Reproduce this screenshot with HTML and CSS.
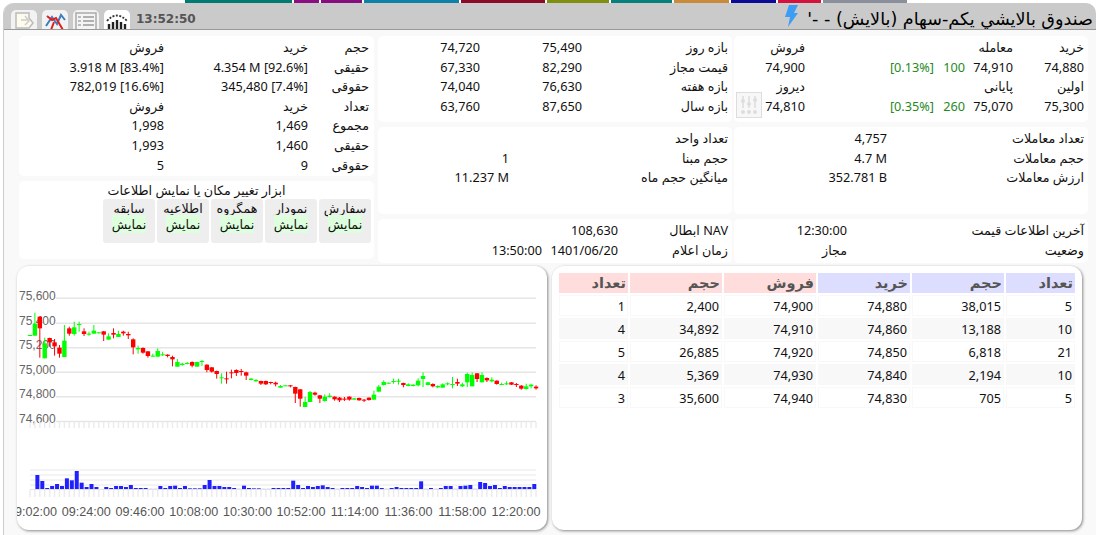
FILE: index.html
```html
<!DOCTYPE html>
<html lang="fa">
<head>
<meta charset="utf-8">
<title>بالایش</title>
<link rel="stylesheet" href="styles.css">
</head>
<body>
<div class="strip">
  <i class="s s1"></i><i class="s s2"></i><i class="s s3"></i><i class="s s4"></i><i class="s s5"></i><i class="s s6"></i><i class="s s7"></i><i class="s s8"></i><i class="s s9"></i><i class="s s10"></i><i class="s s11"></i>
</div>
<div class="win">
  <header class="head">
    <div class="tabs">
      <span class="tab"><svg width="26" height="20" viewBox="0 0 26 20"><path d="M5 3h13v5l4 5-4 5H5z" fill="#fdfbee" stroke="#bbb" stroke-width="1.5"/><path d="M10 10h7M14 6l4 5-4 4" fill="none" stroke="#ccc" stroke-width="1.5"/></svg></span>
      <span class="tab"><svg width="26" height="20" viewBox="0 0 26 20"><path d="M4 16l6-9 5 7 4-9 4 5" fill="none" stroke="#3a7fc0" stroke-width="2"/><path d="M5 6l5 4 4-2 7 12M9 20l3-8" fill="none" stroke="#e02020" stroke-width="2"/></svg></span>
      <span class="tab"><svg width="26" height="20" viewBox="0 0 26 20"><path d="M3 3h20v17H3z" fill="#f4f4f4" stroke="#aaa" stroke-width="1.5"/><path d="M10 7h11M10 11h11M10 15h11" stroke="#999" stroke-width="1.5"/><path d="M5 7h3M5 11h3M5 15h3" stroke="#bbb" stroke-width="2"/></svg></span>
      <span class="tab tab-on"><svg width="26" height="20" viewBox="0 0 26 20"><path d="M3 11q10-11 20 0" fill="none" stroke="#333" stroke-width="1.8" stroke-dasharray="2 1.5"/><path d="M5 20v-6M9 20v-8M13 20v-10M17 20v-8M21 20v-6" stroke="#222" stroke-width="2.4"/></svg></span>
    </div>
    <span class="clock">13:52:50</span>
    <svg class="bolt" width="16" height="22" viewBox="0 0 16 22"><path d="M6 0h9l-4 8h4L5 22l2-10H2z" fill="#3d9df5"/></svg>
    <h1 class="title">صندوق بالایشي یکم-سهام (بالایش) - -'</h1>
  </header>
  <main class="body">
    <section class="col">
      <div class="card c-a">
        <div class="g g-a">
          <div>حجم</div><div>خرید</div><div>فروش</div>
          <div>حقیقی</div><div class="n">4.354 M [92.6%]</div><div class="n">3.918 M [83.4%]</div>
          <div>حقوقی</div><div class="n">345,480 [7.4%]</div><div class="n">782,019 [16.6%]</div>
          <div>تعداد</div><div>خرید</div><div>فروش</div>
          <div>مجموع</div><div class="n">1,469</div><div class="n">1,998</div>
          <div>حقیقی</div><div class="n">1,460</div><div class="n">1,993</div>
          <div>حقوقی</div><div class="n">9</div><div class="n">5</div>
        </div>
      </div>
      <div class="card c-b">
        <div class="tool-title">ابزار تغییر مکان یا نمایش اطلاعات</div>
        <div class="tools">
          <div class="tool">سفارش<br><span class="show">نمایش</span></div>
          <div class="tool">نمودار<br><span class="show">نمایش</span></div>
          <div class="tool">همگروه<br><span class="show">نمایش</span></div>
          <div class="tool">اطلاعیه<br><span class="show">نمایش</span></div>
          <div class="tool">سابقه<br><span class="show">نمایش</span></div>
        </div>
      </div>
    </section>
    <section class="col">
      <div class="card c-1">
        <div class="g g-m1">
          <div>بازه روز</div><div class="n">75,490</div><div class="n">74,720</div>
          <div>قیمت مجاز</div><div class="n">82,290</div><div class="n">67,330</div>
          <div>بازه هفته</div><div class="n">76,630</div><div class="n">74,040</div>
          <div>بازه سال</div><div class="n">87,650</div><div class="n">63,760</div>
        </div>
      </div>
      <div class="card c-2">
        <div class="g g-m2">
          <div>تعداد واحد</div><div class="n"></div>
          <div>حجم مبنا</div><div class="n">1</div>
          <div>میانگین حجم ماه</div><div class="n">11.237 M</div>
        </div>
      </div>
      <div class="card c-3">
        <div class="g g-m3">
          <div>NAV ابطال</div><div class="n">108,630</div><div class="n"></div>
          <div>زمان اعلام</div><div class="n">1401/06/20</div><div class="n">13:50:00</div>
        </div>
      </div>
    </section>
    <section class="col">
      <div class="card c-1 c-rel">
        <div class="g g-r1">
          <div>خرید</div><div>معامله</div><div></div><div></div><div>فروش</div>
          <div class="n">74,880</div><div class="n">74,910</div><div class="n up">100</div><div class="n up">[0.13%]</div><div class="n">74,900</div>
          <div>اولین</div><div>پایانی</div><div></div><div></div><div>دیروز</div>
          <div class="n">75,300</div><div class="n">75,070</div><div class="n up">260</div><div class="n up">[0.35%]</div><div class="n">74,810</div>
        </div>
        <span class="slider-btn"><svg width="22" height="22" viewBox="0 0 22 22"><path d="M5 2v12M11 2v12M17 2v12" stroke="#ddd" stroke-width="1.5"/><circle cx="5" cy="7" r="2" fill="#ddd"/><circle cx="11" cy="10" r="2" fill="#ddd"/><circle cx="17" cy="6" r="2" fill="#ddd"/><circle cx="5" cy="18" r="2" fill="#ddd"/><circle cx="11" cy="18" r="2" fill="#ddd"/><circle cx="17" cy="18" r="2" fill="#ddd"/></svg></span>
      </div>
      <div class="card c-2">
        <div class="g g-r2">
          <div>تعداد معاملات</div><div class="n">4,757</div>
          <div>حجم معاملات</div><div class="n">4.7 M</div>
          <div>ارزش معاملات</div><div class="n">352.781 B</div>
        </div>
      </div>
      <div class="card c-3">
        <div class="g g-r3">
          <div>آخرین اطلاعات قیمت</div><div class="n">12:30:00</div>
          <div>وضعیت</div><div class="n">مجاز</div>
        </div>
      </div>
    </section>
  </main>
  <div class="lower">
    <div class="panel chart-panel"><svg id="chart" width="531" height="264" viewBox="17 266 531 264"></svg></div>
    <div class="panel book-panel">
      <table class="book">
        <thead>
          <tr><th class="b">تعداد</th><th class="b">حجم</th><th class="b">خرید</th><th class="r">فروش</th><th class="r">حجم</th><th class="r">تعداد</th></tr>
        </thead>
        <tbody>
          <tr><td>5</td><td>38,015</td><td>74,880</td><td>74,900</td><td>2,400</td><td>1</td></tr>
          <tr><td>10</td><td>13,188</td><td>74,860</td><td>74,910</td><td>34,892</td><td>4</td></tr>
          <tr><td>21</td><td>6,818</td><td>74,850</td><td>74,920</td><td>26,885</td><td>5</td></tr>
          <tr><td>10</td><td>2,194</td><td>74,840</td><td>74,930</td><td>5,369</td><td>4</td></tr>
          <tr><td>5</td><td>705</td><td>74,830</td><td>74,940</td><td>35,600</td><td>3</td></tr>
        </tbody>
      </table>
    </div>
  </div>
</div>
<script src="chart.js"></script>
</body>
</html>
```

FILE: styles.css
```css
* { box-sizing: border-box; }
html, body { margin: 0; padding: 0; height: 535px; overflow: hidden; background: #fff; }
body { font-family: "Noto Sans", "DejaVu Sans", sans-serif; font-size: 12.7px; color: #111; }

.strip { display: flex; height: 3px; padding-left: 185px; gap: 2px; }
.s { display: block; height: 3px; }
.s1 { width: 107px; background: #007b73; }
.s2 { width: 25px; background: #8a0f80; }
.s3 { width: 41px; background: #860d7e; }
.s4 { width: 95px; background: #0f80a8; }
.s5 { width: 84px; background: #8b0a2a; }
.s6 { width: 62px; background: #7f8f10; }
.s7 { width: 61px; background: #05807c; }
.s8 { width: 55px; background: #c98a3a; }
.s9 { width: 45px; background: #0a0a96; }
.s10 { width: 43px; background: #d3123e; }
.s11 { width: 84px; background: #8a8f9c; }

.win { margin-left: 3px; height: 532px; background: #f9f9f9; border-radius: 10px 10px 0 0; border-left: 1px solid #ccc; }
.head { display: flex; align-items: flex-start; height: 27px; padding: 0 3px 0 7px; background: #cacaca; border-radius: 10px 10px 0 0; border-bottom: 1px solid #999; overflow: hidden; }
.tabs { display: flex; gap: 5px; padding-top: 7px; }
.tab { display: block; width: 26px; height: 20px; background: #f2f2f2; border-radius: 5px 5px 0 0; }
.tab-on { background: #fff; }
.tab svg { display: block; }
.clock { margin: 8px 0 0 6px; font-family: "DejaVu Sans", sans-serif; font-weight: bold; font-size: 12px; color: #555; line-height: 16px; }
.bolt { margin: 2px 8px 0 auto; }
.title { margin: 5px 0 0; font-family: "DejaVu Sans", sans-serif; font-size: 17.6px; font-weight: normal; line-height: 22px; color: #000; direction: rtl; white-space: nowrap; }

.body { display: grid; grid-template-columns: 355px 354px 354px; column-gap: 4px; margin-left: 15px; height: 236px; padding-top: 6px; }
.body .col:nth-child(3) { margin: 0 2px 0 -2px; }
.col { display: flex; flex-direction: column; gap: 5px; }
.card { background: #fff; border-radius: 5px; padding: 2px 4px 0; }
.c-a { height: 140px; padding-right: 5px; }
.c-b { height: 78px; padding-top: 2px; }
.c-1 { height: 86px; }
.c-2 { height: 87px; }
.c-3 { height: 44px; padding-top: 2px; }
.c-rel { position: relative; }

.g { display: grid; direction: rtl; grid-auto-rows: 19.6px; line-height: 19.6px; white-space: nowrap; }
.g > div { text-align: right; }
.g-a { grid-template-columns: 61px 144px 1fr; }
.g-m1 { grid-template-columns: 146px 102px 1fr; }
.g-m2 { grid-template-columns: 219px 1fr; }
.g-m3 { grid-template-columns: 110px 76px 1fr; }
.g-r1 { grid-template-columns: 71px 48px 31px 129px 1fr; }
.g-r2 { grid-template-columns: 197px 1fr; }
.g-r3 { grid-template-columns: 237px 1fr; }
.n { direction: ltr; }
.up { color: #1f8a1f; }

.slider-btn { position: absolute; left: 2px; bottom: 4px; width: 26px; height: 26px; padding: 1px; border: 1px solid #ddd; background: #f7f7f7; }
.slider-btn svg { display: block; }

.tool-title { text-align: center; direction: rtl; line-height: 15px; }
.tools { display: flex; direction: rtl; gap: 2px; margin: 1px -1px 0 0; }
.tool { width: 52px; height: 44px; background: #eee; border-radius: 3px; text-align: center; line-height: 16px; padding-top: 1px; }
.show { background: #dfd; }

.lower { display: flex; gap: 5px; margin-left: 13px; height: 264px; }
.panel { width: 530px; height: 264px; background: #fff; border-radius: 12px; box-shadow: 1px 1px 3px #888; overflow: hidden; }
.book-panel { padding: 5px 0 0 5px; }
#chart { display: block; }
.book { width: 520px; border-collapse: separate; border-spacing: 2px; direction: rtl; table-layout: fixed; }
.book th, .book td { text-align: right; padding: 0 2px 0 0; direction: ltr; }
.book th { height: 20px; line-height: 18px; font-family: "DejaVu Sans", sans-serif; font-weight: bold; font-size: 14.5px; color: #555; direction: rtl; }
.book th:nth-child(1), .book th:nth-child(6) { width: 69px; }
.book th.b { background: #ddf; }
.book th.r { background: #fdd; }
.book td { height: 21px; border: 1px solid #f8f8f8; }
.book tbody tr:nth-child(even) td { background: #f8f8f8; }
```

FILE: chart.js
```js
(function () {
  var svg = document.getElementById('chart');
  var NS = 'http://www.w3.org/2000/svg';
  function el(name, attrs, text) {
    var e = document.createElementNS(NS, name);
    for (var k in attrs) e.setAttribute(k, attrs[k]);
    if (text) e.textContent = text;
    svg.appendChild(e);
    return e;
  }
  function line(x1, y1, x2, y2, color, w) {
    el('line', { x1: x1, y1: y1, x2: x2, y2: y2, stroke: color, 'stroke-width': w });
  }

  // Price grid and labels
  var grid = [[298.3, '75,600'], [323.3, '75,400'], [347.7, '75,200'], [372.3, '75,000'], [396.7, '74,800'], [421.5, '74,600']];
  grid.forEach(function (g) {
    line(56, g[0], 536, g[0], '#e6e6e6', 1.5);
    el('text', { x: 19, y: g[0] + 1.5, 'font-family': 'Liberation Sans', 'font-size': 12, fill: '#666' }, g[1]);
  });
  // Volume grid
  [470, 475, 480, 485].forEach(function (y) { line(30, y, 536, y, '#e8e8e8', 1); });
  line(30, 489.5, 536, 489.5, '#e2e2e2', 1);

  // Axis ticks
  for (var t = 30; t < 537; t += 4.913) {
    line(t, 422, t, 428, '#ececec', 1.5);
    line(t, 490, t, 497, '#ececec', 1.5);
  }

  // Candles: [rising, high, bodyTop, bodyBottom, low] in thirds of a pixel, measured from y=265
  var c = [
    [1,210,210,213,213],[1,143,176,212,212],[0,155,155,190,278],[1,218,235,280,280],[0,218,219,232,245],[0,222,232,244,272],
    [0,240,248,266,278],[1,180,227,276,276],[0,185,190,206,212],[1,170,187,207,212],[1,170,177,179,200],[0,190,199,207,213],
    [1,200,206,209,212],[1,180,197,206,206],[1,202,202,205,205],[0,198,199,209,228],[1,205,214,224,224],[0,190,204,209,220],
    [1,197,207,216,216],[0,197,200,205,212],[0,200,207,211,222],[0,220,223,247,268],[1,242,249,253,266],[0,247,249,263,266],
    [0,258,259,273,278],[1,266,272,275,275],[1,250,258,275,275],[1,260,268,271,273],[0,268,269,273,277],[0,272,276,283,304],
    [1,282,291,305,305],[1,293,296,300,302],[1,291,294,297,298],[0,289,291,302,307],[1,290,291,305,305],[1,285,288,291,303],
    [0,298,299,315,322],[0,306,307,320,323],[0,317,318,327,341],[1,325,337,339,356],[0,320,340,342,356],[0,314,322,324,340],
    [0,313,315,324,333],[0,312,318,321,332],[0,320,322,332,345],[1,339,341,345,346],[1,342,345,349,350],[0,347,348,356,360],
    [0,347,348,358,360],[0,350,351,353,358],[0,350,353,358,364],[1,360,363,368,368],[1,361,361,363,363],[0,360,361,364,367],
    [0,365,366,386,414],[0,372,373,401,425],[1,396,411,426,426],[1,378,381,411,411],[0,380,383,389,392],[0,390,391,401,414],
    [1,388,395,408,410],[1,385,392,396,398],[0,394,395,403,407],[0,396,398,406,411],[0,396,401,403,408],[0,394,395,404,407],
    [1,400,400,404,404],[0,398,399,406,407],[0,402,404,407,411],[0,397,398,405,407],[1,377,389,404,404],[1,360,365,380,382],
    [1,346,351,360,362],[1,353,353,356,356],[1,341,348,351,356],[1,341,347,350,359],[0,353,354,360,367],[1,355,358,363,364],
    [1,358,359,363,364],[1,340,347,361,364],[1,322,333,342,366],[1,351,352,360,361],[0,355,357,364,367],[1,361,363,367,369],
    [1,355,358,368,368],[1,352,355,358,361],[1,336,357,358,370],[0,341,351,356,363],[1,353,358,364,366],[1,323,327,352,366],
    [1,322,330,364,364],[0,324,325,342,351],[1,322,330,352,352],[0,337,339,346,351],[1,337,344,349,352],[0,346,347,357,359],
    [1,353,357,358,360],[1,349,355,358,360],[0,351,352,359,360],[0,354,357,359,366],[0,360,362,371,374],[1,356,364,372,374],
    [1,356,359,364,370],[0,361,365,370,374]
  ];
  c.forEach(function (d, i) {
    var x = 30 + 4.913 * i, color = d[0] ? '#00ff00' : '#ff0000';
    function Y(v) { return 265 + v / 3; }
    line(x, Y(d[1]), x, Y(d[4]), color, 1);
    el('rect', { x: x - 2.2, y: Y(d[2]), width: 4.4, height: Math.max(1, (d[3] - d[2]) / 3), fill: color });
  });

  // Volume bars: tops in thirds of a pixel, measured from y=420
  var v = [165,183,204,198,192,198,175,181,153,188,201,192,201,207,201,204,198,198,201,195,204,204,204,206,206,198,204,198,197,204,198,205,205,205,195,180,198,198,201,201,204,206,197,204,205,205,206,206,204,204,
    204,204,182,195,204,198,201,198,196,201,204,206,204,204,204,198,201,204,197,197,204,206,204,201,204,204,204,204,184,
    206,204,206,204,198,198,206,198,197,195,206,186,189,198,195,204,198,201,201,201,201,201,192];
  v.forEach(function (top, i) {
    var x = 534.3 - (101 - i) * 4.92;
    var h = (207 - top) / 3;
    if (h <= 0) return;
    el('rect', { x: x - 2, y: 489 - h, width: 4, height: h, fill: top >= 206 ? '#b8b8ff' : '#2020ff' });
  });

  // Time axis
  var times = ['09:02:00', '09:24:00', '09:46:00', '10:08:00', '10:30:00', '10:52:00', '11:14:00', '11:36:00', '11:58:00', '12:20:00'];
  times.forEach(function (t, i) {
    el('text', { x: 32.6 + 53.7 * i, y: 515.5, 'text-anchor': 'middle', 'font-family': 'Liberation Sans', 'font-size': 12.6, fill: '#555' }, t);
  });
})();
```
